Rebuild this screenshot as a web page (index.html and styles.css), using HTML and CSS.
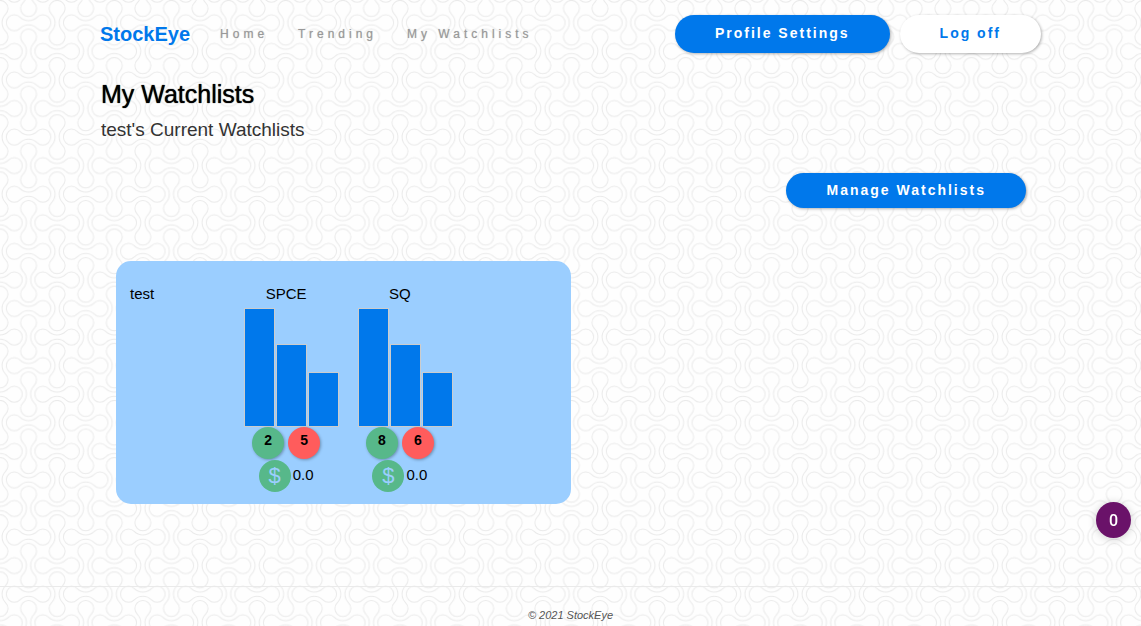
FILE: index.html
```html
<!DOCTYPE html>
<html lang="en">
<head>
<meta charset="utf-8">
<meta name="viewport" content="width=device-width, initial-scale=1">
<title>StockEye</title>
<link rel="stylesheet" href="styles.css">
</head>
<body>
<header class="topbar">
  <a class="brand" href="#">StockEye</a>
  <nav class="nav">
    <a href="#">Home</a>
    <a href="#">Trending</a>
    <a href="#">My Watchlists</a>
  </nav>
  <div class="actions">
    <button type="button" class="pill pill-primary">Profile Settings</button>
    <button type="button" class="pill pill-light">Log off</button>
  </div>
</header>

<main class="content">
  <h1 class="title">My Watchlists</h1>
  <p class="subtitle">test's Current Watchlists</p>
  <div class="toolbar">
    <button type="button" class="pill pill-primary pill-compact">Manage Watchlists</button>
  </div>
  <div class="lists">
    <section class="card">
      <h2 class="label">test</h2>
      <article class="stock">
        <h3 class="label">SPCE</h3>
        <div class="chart">
          <span class="bar" style="height:119px"></span>
          <span class="bar" style="height:83px"></span>
          <span class="bar" style="height:55px"></span>
        </div>
        <div class="votes"><span class="vote up">2</span><span class="vote down">5</span></div>
        <div class="price"><span class="coin">$</span><span>0.0</span></div>
      </article>
      <article class="stock">
        <h3 class="label">SQ</h3>
        <div class="chart">
          <span class="bar" style="height:119px"></span>
          <span class="bar" style="height:83px"></span>
          <span class="bar" style="height:55px"></span>
        </div>
        <div class="votes"><span class="vote up">8</span><span class="vote down">6</span></div>
        <div class="price"><span class="coin">$</span><span>0.0</span></div>
      </article>
    </section>
  </div>
</main>

<footer class="footer">© 2021 StockEye</footer>
<button type="button" class="counter">0</button>
</body>
</html>
```
FILE: styles.css
```css
* { box-sizing: border-box; }

body {
  margin: 0;
  min-height: 100vh;
  display: flex;
  flex-direction: column;
  font-family: "Liberation Sans", Arial, Helvetica, sans-serif;
  font-size: 15px;
  color: #000;
  background: #fefefe url("data:image/svg+xml,%3Csvg xmlns='http://www.w3.org/2000/svg' width='400' height='400'%3E%3Cdefs%3E%3Cpath id='d' d='M-8.63-5.66A12.2 12.2 0 0 0 8.63-5.66A8 8 0 1 1 8.63 5.66A12.2 12.2 0 0 0-8.63 5.66A8 8 0 1 1-8.63-5.66Z'/%3E%3Cpattern id='p' width='57.142857' height='57.142857' patternUnits='userSpaceOnUse'%3E%3Cg fill='none' stroke='%23eaeaea'%3E%3Cuse href='%23d' x='28.57' y='22.7'/%3E%3Cuse href='%23d' x='0' y='51.27'/%3E%3Cuse href='%23d' x='57.14' y='51.27'/%3E%3Cuse href='%23d' x='0' y='-5.87'/%3E%3Cuse href='%23d' x='57.14' y='-5.87'/%3E%3Cuse href='%23d' transform='translate(0 22.7) rotate(90)'/%3E%3Cuse href='%23d' transform='translate(57.14 22.7) rotate(90)'/%3E%3Cuse href='%23d' transform='translate(28.57 51.27) rotate(90)'/%3E%3Cuse href='%23d' transform='translate(28.57 -5.87) rotate(90)'/%3E%3C/g%3E%3C/pattern%3E%3C/defs%3E%3Crect width='400' height='400' fill='url(%23p)'/%3E%3C/svg%3E");
}

a { text-decoration: none; }

.topbar {
  display: flex;
  align-items: center;
  gap: 30px;
  padding: 15px 100px 0;
}

.brand {
  font-size: 20px;
  font-weight: 700;
  color: #0078eb;
}

.nav { display: flex; gap: 30px; }

.nav a {
  font-size: 12px;
  letter-spacing: 4px;
  color: #999;
  text-shadow: 0 0 1px #bbb;
}

.actions {
  display: flex;
  gap: 10px;
  margin-left: auto;
}

.pill {
  height: 38px;
  padding: 0 40px 2px;
  border: 0;
  border-radius: 20px;
  font-family: inherit;
  font-size: 14px;
  font-weight: 700;
  letter-spacing: 2px;
  box-shadow: 1px 1px 3px rgba(0, 0, 0, .3);
  cursor: pointer;
}

.pill-primary { background: #0078eb; color: #fff; }
.pill-light { background: #fff; color: #0078eb; }
.pill-compact { height: 35px; }

.content {
  flex: 1;
  padding: 26px 100px 40px 101px;
}

.title {
  margin: 0 0 8px;
  font-size: 25px;
  font-weight: 400;
  line-height: 30px;
  text-shadow: 0 0 1px #000;
}

.subtitle {
  margin: 0;
  font-size: 19px;
  line-height: 26px;
  color: #333;
}

.toolbar {
  display: flex;
  justify-content: flex-end;
  padding: 30px 15px 53px;
}

.lists {
  display: grid;
  grid-template-columns: 1fr 1fr;
  padding: 0 15px;
}

.card {
  display: grid;
  grid-template-columns: repeat(4, minmax(0, 1fr));
  padding: 24px 0 12px;
  border-radius: 15px;
  background: #9bceff;
}

.label {
  margin: 0;
  font-size: 15px;
  font-weight: 400;
  line-height: 18px;
  text-align: center;
}

.card > .label { padding-left: 14px; text-align: left; }

.stock { padding: 0 15px 0 14px; }

.chart {
  display: flex;
  align-items: flex-end;
  gap: 1px;
  height: 119px;
  margin-top: 5px;
}

.bar {
  flex: 0 0 31px;
  border: 1px solid #ccc;
  background: #0078eb;
}

.votes,
.price {
  display: flex;
  justify-content: center;
}

.votes { gap: 4px; }

.vote,
.coin {
  width: 32px;
  height: 32px;
  border-radius: 50%;
  line-height: 32px;
  text-align: center;
}

.vote {
  font-size: 14px;
  font-weight: 700;
  line-height: 26px;
  box-shadow: 1px 1px 3px rgba(0, 0, 0, .3);
}

.up, .coin { background: #57b88a; }
.down { background: #ff5c5c; }

.price {
  gap: 2px;
  margin-top: 1px;
  line-height: 30px;
}

.coin { font-size: 22px; color: #9bceff; }

.footer {
  height: 40px;
  padding-top: 21px;
  border-top: 1px solid #eaeaea;
  font-size: 11px;
  font-style: italic;
  line-height: 14px;
  text-align: center;
  color: #555;
}

.counter {
  position: fixed;
  right: 10px;
  bottom: 88px;
  width: 35px;
  height: 36px;
  padding: 0;
  border: 0;
  border-radius: 50%;
  background: #6a1269;
  color: #fff;
  font: 500 16px Roboto, sans-serif;
  box-shadow: 0 1px 8px rgba(0, 0, 0, .2);
}
```
